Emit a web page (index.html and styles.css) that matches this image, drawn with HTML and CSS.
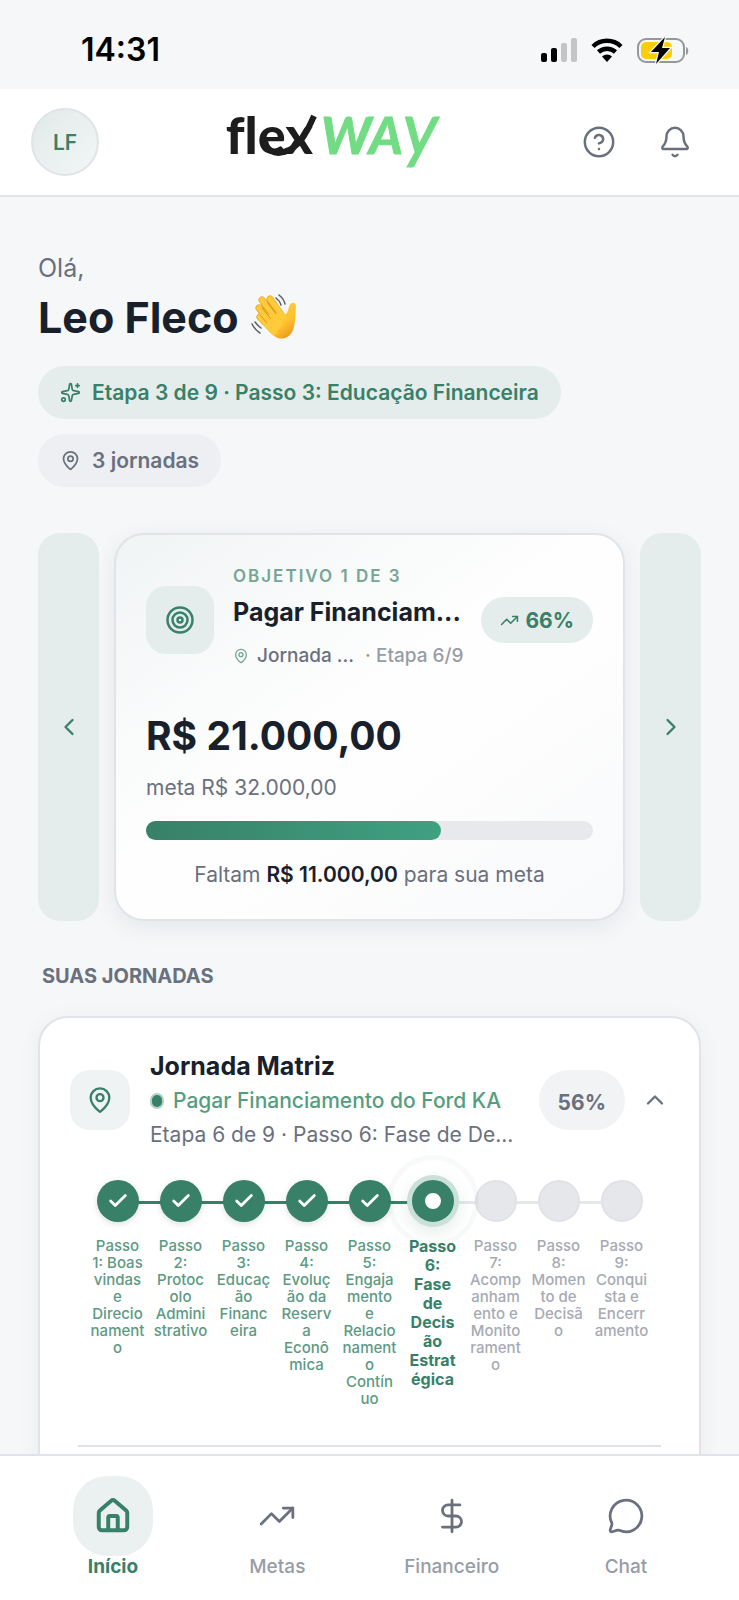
FILE: index.html
```html
<!DOCTYPE html>
<html lang="pt-BR">
<head>
  <meta charset="UTF-8">
  <meta name="viewport" content="width=device-width, initial-scale=1.0">
  <title>flexWAY</title>
  <link rel="stylesheet" href="styles.css">
</head>
<body>
  <!-- Shared icons -->
  <svg class="sprite" aria-hidden="true">
    <symbol id="pin" viewBox="0 0 24 24">
      <path d="M20 10c0 4.993-5.539 10.193-7.399 11.799a1 1 0 0 1-1.202 0C9.539 20.193 4 14.993 4 10a8 8 0 0 1 16 0"/>
      <circle cx="12" cy="10" r="3"/>
    </symbol>
    <symbol id="trend" viewBox="0 0 24 24">
      <path d="M16 7h6v6"/>
      <path d="m22 7-8.5 8.5-5-5L2 17"/>
    </symbol>
    <symbol id="check" viewBox="0 0 24 24">
      <path d="M20 6 9 17l-5-5"/>
    </symbol>
  </svg>

  <div class="status-bar">
    <time>14:31</time>
    <div class="status-icons">
      <svg width="36" height="24" viewBox="0 0 36 24">
        <rect x="0" y="15" width="6" height="9" rx="2"/>
        <rect x="10" y="10" width="6" height="14" rx="2"/>
        <rect x="20" y="5" width="6" height="19" rx="2" fill="#c4c5c7"/>
        <rect x="30" y="0" width="6" height="24" rx="2" fill="#c4c5c7"/>
      </svg>
      <svg width="32" height="24" viewBox="0 0 32 24">
        <path d="M2 8.500a20 20 0 0 1 28 0M7.500 14a12.500 12.500 0 0 1 17 0" fill="none" stroke="#000" stroke-width="4.500"/>
        <path d="M16 24l-5-5.500a7.500 7.500 0 0 1 10 0z"/>
      </svg>
      <svg width="52" height="28" viewBox="0 0 52 28">
        <rect x="1" y="3" width="46" height="23" rx="8" fill="none" stroke="#96979b" stroke-width="2"/>
        <path d="M49 11c3 1 3 7 0 8z" fill="#96979b"/>
        <rect x="4" y="6" width="31" height="17" rx="5" fill="#ffcc0a"/>
        <path d="M28 1 14 16h8l-3 12 14-16h-8l3-11z" stroke="#f5f7f9" stroke-width="2.500" paint-order="stroke"/>
      </svg>
    </div>
  </div>

  <header class="header">
    <button class="avatar" aria-label="Perfil">LF</button>
    <a class="logo" href="#" aria-label="flexWAY">
      <span class="logo-flex">flex</span><span class="logo-way">WA<span class="logo-y">y</span></span>
      <svg class="logo-swoosh" width="58" height="46" viewBox="0 0 58 46" aria-hidden="true">
        <path d="M3 26c1 10 9 15 19 12C37 34 44 20 52 2" />
      </svg>
    </a>
    <div class="header-actions">
      <button class="icon-btn" aria-label="Ajuda">
        <svg class="icon" width="34" height="34" viewBox="0 0 24 24"><circle cx="12" cy="12" r="10"/><path d="M9.090 9a3 3 0 0 1 5.830 1c0 2-3 3-3 3M12 17h.01"/></svg>
      </button>
      <button class="icon-btn" aria-label="Notificações">
        <svg class="icon" width="34" height="34" viewBox="0 0 24 24"><path d="M10.268 21a2 2 0 0 0 3.464 0"/><path d="M3.262 15.326A1 1 0 0 0 4 17h16a1 1 0 0 0 .74-1.673C19.410 13.956 18 12.499 18 8A6 6 0 0 0 6 8c0 4.499-1.411 5.956-2.738 7.326"/></svg>
      </button>
    </div>
  </header>

  <main class="content">
    <section class="greeting">
      <p class="hello">Olá,</p>
      <h1>Leo Fleco
        <svg class="wave" width="46" height="46" viewBox="0 0 46 46" aria-hidden="true">
          <defs>
            <linearGradient id="skin" x1="0" y1="0" x2="0.700" y2="1">
              <stop offset="0" stop-color="#ffd64a"/>
              <stop offset="0.700" stop-color="#fdc22f"/>
              <stop offset="1" stop-color="#ee9b1c"/>
            </linearGradient>
          </defs>
          <g fill="none" stroke="#e9a01f" stroke-linecap="round" stroke-width="7">
            <path d="M19 5l12 17M11 6l16 22M8 14l15 18M9 23l14 14"/>
          </g>
          <path d="M20 18 35 20C38 17 37 12 40 9.500C42 8 45 9 45 12C44 20 45 28 42 36C39 43 33 46 27 44C21 42 15 34 11 29z" fill="url(#skin)"/>
          <g fill="none" stroke="#ffcb3a" stroke-linecap="round" stroke-width="5.500">
            <path d="M19 5l14 19M11 6l18 24M8 14l17 20M9 23l14 15"/>
          </g>
          <path d="M16 8l9 12M11 14l9 11M9 21l7 8" fill="none" stroke="#dd951e" stroke-width="1"/>
          <g fill="none" stroke="#59606a" stroke-linecap="round" stroke-width="1.500">
            <path d="M28 1q5 4 6 9M25 4q4 3 5 7M1 30q3 6 8 9M4 28q3 4 6 6"/>
          </g>
        </svg>
      </h1>
      <div class="chips">
        <span class="chip chip-green">
          <svg class="icon" width="21" height="21" viewBox="0 0 24 24"><path d="M11.017 2.814a1 1 0 0 1 1.966 0l1.051 5.558a2 2 0 0 0 1.594 1.594l5.558 1.051a1 1 0 0 1 0 1.966l-5.558 1.051a2 2 0 0 0-1.594 1.594l-1.051 5.558a1 1 0 0 1-1.966 0l-1.051-5.558a2 2 0 0 0-1.594-1.594l-5.558-1.051a1 1 0 0 1 0-1.966l5.558-1.051a2 2 0 0 0 1.594-1.594z"/><path d="M20 2v4M22 4h-4"/><circle cx="4" cy="20" r="2"/></svg>
          Etapa 3 de 9 · Passo 3: Educação Financeira
        </span>
        <span class="chip">
          <svg class="icon" width="21" height="21"><use href="#pin"/></svg>
          3 jornadas
        </span>
      </div>
    </section>

    <section class="carousel">
      <button class="carousel-btn" aria-label="Objetivo anterior">
        <svg class="icon" width="28" height="28" viewBox="0 0 24 24"><path d="m15 18-6-6 6-6"/></svg>
      </button>
      <article class="goal">
        <div class="goal-head">
          <div class="tile">
            <svg class="icon" width="30" height="30" viewBox="0 0 24 24"><circle cx="12" cy="12" r="10"/><circle cx="12" cy="12" r="6"/><circle cx="12" cy="12" r="2"/></svg>
          </div>
          <div class="goal-info">
            <p class="eyebrow">Objetivo 1 de 3</p>
            <h2>Pagar Financiam...</h2>
            <p class="goal-journey">
              <svg class="icon" width="16" height="16"><use href="#pin"/></svg>
              <span class="goal-journey-name">Jornada ...</span>
              <span class="goal-stage">· Etapa 6/9</span>
            </p>
          </div>
          <span class="badge">
            <svg class="icon" width="19" height="19"><use href="#trend"/></svg>
            66%
          </span>
        </div>
        <p class="amount">R$ 21.000,00</p>
        <p class="target">meta R$ 32.000,00</p>
        <div class="progress" role="progressbar" aria-label="Progresso da meta" aria-valuenow="66" aria-valuemin="0" aria-valuemax="100">
          <div class="progress-fill" style="width: 66%"></div>
        </div>
        <p class="missing">Faltam <strong>R$ 11.000,00</strong> para sua meta</p>
      </article>
      <button class="carousel-btn" aria-label="Próximo objetivo">
        <svg class="icon" width="28" height="28" viewBox="0 0 24 24"><path d="m9 18 6-6-6-6"/></svg>
      </button>
    </section>

    <h2 class="section-title">Suas jornadas</h2>

    <article class="journey">
      <button class="journey-head" aria-expanded="true">
        <span class="tile tile-small">
          <svg class="icon" width="28" height="28"><use href="#pin"/></svg>
        </span>
        <span class="journey-info">
          <span class="journey-name">Jornada Matriz</span>
          <span class="journey-goal"><span class="dot"></span>Pagar Financiamento do Ford KA</span>
          <span class="journey-stage">Etapa 6 de 9 · Passo 6: Fase de De...</span>
        </span>
        <span class="percent">56%</span>
        <svg class="icon chevron" width="28" height="28" viewBox="0 0 24 24"><path d="m18 15-6-6-6 6"/></svg>
      </button>

      <ol class="steps">
        <li class="step done"><span class="step-dot"><svg class="icon" width="22" height="22"><use href="#check"/></svg></span><span class="step-label">Passo 1: Boas vindas e Direcio<wbr>nament<wbr>o</span></li>
        <li class="step done"><span class="step-dot"><svg class="icon" width="22" height="22"><use href="#check"/></svg></span><span class="step-label">Passo 2: Protoc<wbr>olo Admini<wbr>strativo</span></li>
        <li class="step done"><span class="step-dot"><svg class="icon" width="22" height="22"><use href="#check"/></svg></span><span class="step-label">Passo 3: Educaç<wbr>ão Financ<wbr>eira</span></li>
        <li class="step done"><span class="step-dot"><svg class="icon" width="22" height="22"><use href="#check"/></svg></span><span class="step-label">Passo 4: Evoluç<wbr>ão da Reserv<wbr>a Econô<wbr>mica</span></li>
        <li class="step done"><span class="step-dot"><svg class="icon" width="22" height="22"><use href="#check"/></svg></span><span class="step-label">Passo 5: Engaja<wbr>mento e Relacio<wbr>nament<wbr>o Contín<wbr>uo</span></li>
        <li class="step current" aria-current="step"><span class="step-dot"></span><span class="step-label">Passo 6: Fase de Decis<wbr>ão Estrat<wbr>égica</span></li>
        <li class="step"><span class="step-dot"></span><span class="step-label">Passo 7: Acomp<wbr>anham<wbr>ento e Monito<wbr>rament<wbr>o</span></li>
        <li class="step"><span class="step-dot"></span><span class="step-label">Passo 8: Momen<wbr>to de Decisã<wbr>o</span></li>
        <li class="step"><span class="step-dot"></span><span class="step-label">Passo 9: Conqui<wbr>sta e Encerr<wbr>amento</span></li>
      </ol>
      <hr>
    </article>
  </main>

  <nav class="tabs" aria-label="Principal">
    <a class="tab active" href="#" aria-current="page">
      <span class="tab-icon"><svg class="icon" width="38" height="38" viewBox="0 0 24 24"><path d="M15 21v-8a1 1 0 0 0-1-1h-4a1 1 0 0 0-1 1v8"/><path d="M3 10a2 2 0 0 1 .709-1.528l7-5.999a2 2 0 0 1 2.582 0l7 5.999A2 2 0 0 1 21 10v9a2 2 0 0 1-2 2H5a2 2 0 0 1-2-2z"/></svg></span>
      Início
    </a>
    <a class="tab" href="#">
      <span class="tab-icon"><svg class="icon" width="38" height="38"><use href="#trend"/></svg></span>
      Metas
    </a>
    <a class="tab" href="#">
      <span class="tab-icon"><svg class="icon" width="38" height="38" viewBox="0 0 24 24"><path d="M12 2v20M17 5H9.500a3.500 3.500 0 0 0 0 7h5a3.500 3.500 0 0 1 0 7H6"/></svg></span>
      Financeiro
    </a>
    <a class="tab" href="#">
      <span class="tab-icon"><svg class="icon" width="38" height="38" viewBox="0 0 24 24"><path d="M2.992 16.342a2 2 0 0 1 .094 1.167l-1.065 3.290a1 1 0 0 0 1.236 1.168l3.413-.998a2 2 0 0 1 1.099.092 10 10 0 1 0-4.777-4.719"/></svg></span>
      Chat
    </a>
  </nav>
</body>
</html>
```
FILE: styles.css
```css
:root {
  --green: #388068;
  --green-soft: #5c9a83;
  --mint: #e5edec;
  --ink: #18202b;
  --gray: #6a707d;
  --border: #e0e3e7;
  --bg: #f5f7f9;
}
* {
  box-sizing: border-box;
}
body {
  display: flex;
  flex-direction: column;
  height: 100vh;
  margin: 0;
  background: var(--bg);
  color: var(--ink);
  font-family: Inter, "Liberation Sans", sans-serif;
}
h1, h2, p, ol {
  margin: 0;
  padding: 0;
}
button {
  padding: 0;
  border: none;
  background: none;
  color: inherit;
  font: inherit;
  cursor: pointer;
}
a {
  text-decoration: none;
}
.sprite {
  display: none;
}
.icon {
  flex: none;
  fill: none;
  stroke: currentColor;
  stroke-width: 2;
  stroke-linecap: round;
  stroke-linejoin: round;
}

/* Status bar */
.status-bar {
  display: flex;
  flex: none;
  align-items: center;
  justify-content: space-between;
  height: 89px;
  padding: 10px 50px 0 81px;
  color: #000;
  font-size: 32px;
  font-weight: 600;
}
.status-icons {
  display: flex;
  align-items: center;
  gap: 14px;
}

/* Header */
.header {
  display: flex;
  flex: none;
  align-items: center;
  justify-content: space-between;
  height: 108px;
  padding: 0 30px 0 31px;
  background: #fff;
  border-bottom: 2px solid var(--border);
}
.avatar {
  width: 68px;
  height: 68px;
  border: 2px solid var(--border);
  border-radius: 50%;
  background: linear-gradient(135deg, #e1eae8, #f2f6f6);
  color: var(--green);
  font-size: 21px;
  font-weight: 600;
}
.logo {
  position: relative;
  display: flex;
  gap: 8px;
  margin-bottom: 16px;
  font-family: Lato, sans-serif;
  font-size: 52px;
  font-variant-ligatures: none;
  font-weight: 700;
  line-height: 68px;
}
.logo-flex {
  color: #1d1d1d;
  font-weight: 900;
}
.logo-way {
  color: #71dc83;
  font-style: italic;
  -webkit-text-stroke: 1px #71dc83;
}
.logo-y {
  font-size: 74px;
  font-weight: 400;
  line-height: 0;
}
.logo-swoosh {
  position: absolute;
  top: 14px;
  left: 36px;
  fill: none;
  stroke: #1d1d1d;
  stroke-width: 6;
}
.header-actions {
  display: flex;
  gap: 8px;
  color: var(--gray);
}
.icon-btn {
  display: grid;
  place-items: center;
  width: 68px;
  height: 68px;
}
.icon-btn .icon {
  stroke-width: 1.75;
}

/* Content */
.content {
  flex: 1;
  min-height: 0;
  padding: 55px 38px;
  overflow-y: auto;
  scrollbar-width: none;
}
.hello {
  color: var(--gray);
  font-size: 25px;
  line-height: 32px;
}
h1 {
  display: flex;
  align-items: center;
  gap: 12px;
  margin-bottom: 16px;
  font-size: 43px;
  font-weight: 700;
  line-height: 66px;
}
.chips {
  display: flex;
  flex-wrap: wrap;
  gap: 15px;
}
.chip {
  display: flex;
  align-items: center;
  gap: 11px;
  height: 53px;
  padding: 0 22px;
  border-radius: 27px;
  background: #eeeff3;
  color: var(--gray);
  font-size: 21px;
  font-weight: 600;
}
.chip-green {
  background: var(--mint);
  color: var(--green);
}

/* Goal carousel */
.carousel {
  display: grid;
  grid-template-columns: 61px minmax(0, 1fr) 61px;
  gap: 15px;
  margin-top: 46px;
}
.carousel-btn {
  display: grid;
  place-items: center;
  border-radius: 22px;
  background: var(--mint);
  color: var(--green);
}
.goal {
  padding: 30px 30px 28px;
  border: 2px solid var(--border);
  border-radius: 30px;
  background: linear-gradient(145deg, #f1f4f5, #fefefe 45%, #fefefe 60%, #f8f9fb);
  box-shadow: 0 6px 24px rgba(20, 30, 45, 0.07);
}
.goal-head {
  display: flex;
  align-items: center;
}
.tile {
  display: grid;
  flex: none;
  place-items: center;
  width: 68px;
  height: 68px;
  border-radius: 20px;
  background: var(--mint);
  color: var(--green);
}
.goal-info {
  flex: 1;
  min-width: 0;
  margin: 0 14px 0 19px;
}
.eyebrow {
  color: #76a594;
  font-size: 17px;
  font-weight: 600;
  letter-spacing: 2px;
  line-height: 22px;
  text-transform: uppercase;
}
.goal-info h2 {
  font-size: 25px;
  font-weight: 700;
  line-height: 50px;
  white-space: nowrap;
}
.goal-journey {
  display: flex;
  align-items: center;
  gap: 8px;
  color: var(--gray);
  font-size: 19px;
  font-weight: 500;
  line-height: 38px;
  white-space: nowrap;
}
.goal-journey .icon {
  color: #76a594;
}
.goal-stage {
  margin-left: 3px;
  color: #979ca6;
}
.badge {
  display: flex;
  align-items: center;
  gap: 6px;
  height: 46px;
  padding: 0 19px;
  border-radius: 23px;
  background: var(--mint);
  color: var(--green);
  font-size: 21px;
  font-weight: 700;
}
.amount {
  margin-top: 31px;
  font-size: 39px;
  font-weight: 700;
  line-height: 60px;
}
.target {
  margin-top: 3px;
  color: var(--gray);
  font-size: 21px;
  line-height: 38px;
}
.progress {
  height: 19px;
  margin-top: 14px;
  border-radius: 10px;
  background: #e8e9ed;
}
.progress-fill {
  height: 100%;
  border-radius: 10px;
  background: linear-gradient(90deg, #388068, #3fa181);
}
.missing {
  margin-top: 19px;
  color: var(--gray);
  font-size: 21px;
  line-height: 32px;
  text-align: center;
}
.missing strong {
  color: var(--ink);
  font-weight: 600;
}

/* Journeys */
.section-title {
  margin: 40px 4px 25px;
  color: var(--gray);
  font-size: 20px;
  font-weight: 700;
  line-height: 30px;
  text-transform: uppercase;
}
.journey {
  padding: 30px;
  border: 2px solid var(--border);
  border-radius: 30px;
  background: #fff;
  box-shadow: 0 4px 24px rgba(20, 30, 45, 0.05);
}
.journey-head {
  display: flex;
  align-items: center;
  width: 100%;
  text-align: left;
}
.tile-small {
  width: 60px;
  height: 60px;
  background: #eff3f3;
}
.journey-info {
  display: flex;
  flex: 1;
  flex-direction: column;
  min-width: 0;
  margin: 0 20px;
  line-height: 34px;
}
.journey-name {
  font-size: 25px;
  font-weight: 700;
  line-height: 36px;
}
.journey-goal {
  display: flex;
  align-items: center;
  gap: 9px;
  color: #559d81;
  font-size: 21px;
  font-weight: 500;
  white-space: nowrap;
}
.dot {
  width: 14px;
  height: 16px;
  border: 2px solid #b5d2c7;
  border-radius: 7px;
  background: var(--green);
}
.journey-stage {
  color: var(--gray);
  font-size: 21px;
  white-space: nowrap;
}
.percent {
  height: 60px;
  padding: 0 19px;
  border-radius: 30px;
  background: #f2f3f5;
  color: var(--gray);
  font-size: 21px;
  font-weight: 700;
  line-height: 66px;
}
.chevron {
  margin-left: 16px;
  color: var(--gray);
}
.steps {
  display: grid;
  grid-template-columns: repeat(9, minmax(0, 1fr));
  margin: 28px 16px 0;
  list-style: none;
}
.step {
  position: relative;
  display: flex;
  flex-direction: column;
  align-items: center;
  gap: 15px;
  color: #a6aab4;
}
/* connector to the next step */
.step:not(:last-child)::after {
  content: "";
  position: absolute;
  top: 21px;
  left: 50%;
  width: 100%;
  height: 3px;
  background: #e6e7eb;
}
.step.done::after {
  background: var(--green);
}
.step-dot {
  position: relative;
  z-index: 1;
  display: grid;
  place-items: center;
  width: 42px;
  height: 42px;
  border: 2px solid #e1e2e7;
  border-radius: 50%;
  background: #e6e7eb;
}
.done .step-dot {
  border: none;
  background: var(--green);
  color: #fff;
  box-shadow: 0 2px 6px rgba(20, 60, 45, 0.15);
}
.done .icon {
  stroke-width: 3;
}
.current .step-dot {
  z-index: 2;
  border: 13px solid var(--green);
  background: #fff;
  box-shadow: 0 0 0 5px #cbe0d8, 0 6px 16px 6px rgba(56, 128, 104, 0.12);
}
.current .step-dot::after {
  content: "";
  position: absolute;
  inset: -38px;
  border: 5px solid rgba(56, 128, 104, 0.04);
  border-radius: 50%;
}
.step-label {
  width: 56px;
  font-size: 15px;
  font-weight: 500;
  line-height: 17px;
  text-align: center;
  overflow-wrap: anywhere;
}
.done .step-label {
  color: var(--green-soft);
}
.current .step-label {
  color: var(--green);
  font-size: 16px;
  font-weight: 700;
  line-height: 19px;
}
hr {
  height: 2px;
  margin: 38px 8px 40px;
  border: none;
  background: var(--border);
}

/* Bottom tabs */
.tabs {
  display: flex;
  flex: none;
  justify-content: space-between;
  height: 146px;
  padding: 20px 63px 0 73px;
  background: #fff;
  border-top: 2px solid var(--border);
}
.tab {
  display: flex;
  flex-direction: column;
  align-items: center;
  width: 100px;
  color: #979ca6;
  font-size: 19px;
  font-weight: 500;
  line-height: 22px;
}
.tab-icon {
  display: grid;
  flex: none;
  place-items: center;
  width: 80px;
  height: 80px;
  border-radius: 34px;
  color: var(--gray);
}
.tab-icon .icon {
  stroke-width: 1.75;
}
.tab.active {
  width: 80px;
  color: var(--green);
  font-weight: 700;
}
.active .tab-icon {
  background: #ebf1f0;
  color: var(--green);
}
.active .icon {
  stroke-width: 2.5;
}
```
